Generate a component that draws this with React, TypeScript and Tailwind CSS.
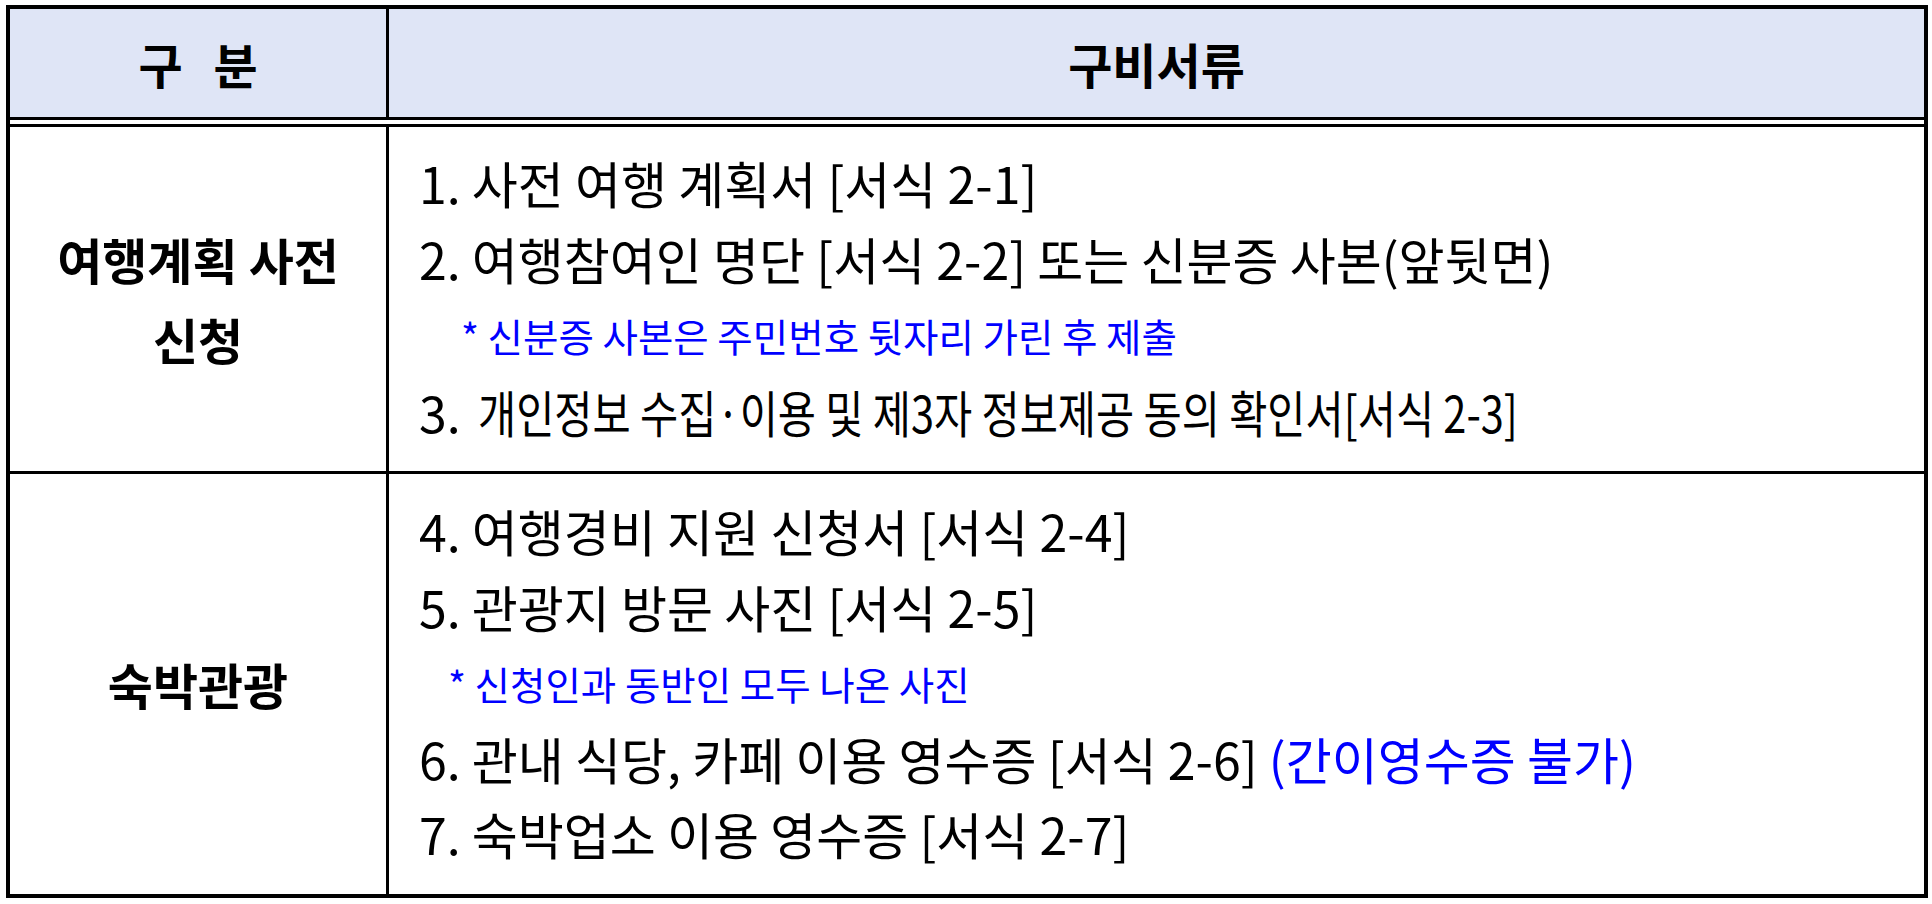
const font = { fontFamily: '"Noto Sans CJK KR", "Noto Sans", sans-serif' }

function Line({ h, children }: { h: string; children: React.ReactNode }) {
  return <div className={`whitespace-nowrap text-[50px] text-black ${h}`}>{children}</div>
}

function Note({ h, indent, children }: { h: string; indent: string; children: React.ReactNode }) {
  return (
    <div className={`whitespace-nowrap text-[38.5px] text-[#0000ff] ${h} ${indent}`}>
      {children}
    </div>
  )
}

export default function App() {
  return (
    <main className="min-h-screen bg-white pl-[6px] pt-[5px]" style={font}>
      <div className="w-[1922px] border-4 border-black">
        <div className="grid h-[111px] grid-cols-[379px_1fr] border-b-[3px] border-black bg-[#dfe5f6]">
          <div className="flex items-center justify-center border-r-[3px] border-black text-[48px] font-bold [word-spacing:20px]">
            구 분
          </div>
          <div className="flex items-center justify-center text-[48px] font-bold">구비서류</div>
        </div>
        <div className="h-[4px] bg-white" />

        <div className="grid h-[350px] grid-cols-[379px_1fr] border-y-[3px] border-black">
          <div className="flex flex-col items-center justify-center border-r-[3px] border-black text-[49px] font-bold leading-[80px]">
            <span>여행계획 사전</span>
            <span>신청</span>
          </div>
          <div className="flex flex-col justify-center pb-[6px] pl-[30px]">
            <Line h="leading-[76px]">1. 사전 여행 계획서 [서식 2-1]</Line>
            <Line h="leading-[77px]">2. 여행참여인 명단 [서식 2-2] 또는 신분증 사본(앞뒷면)</Line>
            <Note h="leading-[77px]" indent="pl-[42px]">* 신분증 사본은 주민번호 뒷자리 가린 후 제출</Note>
            <Line h="leading-[74px]">
              3.{" "}
              <span className="ml-[6px] inline-block origin-left scale-x-[0.83]">
                개인정보 수집·이용 및 제3자 정보제공 동의 확인서[서식 2-3]
              </span>
            </Line>
          </div>
        </div>

        <div className="grid h-[420px] grid-cols-[379px_1fr]">
          <div className="flex items-center justify-center border-r-[3px] border-black text-[49px] font-bold">
            숙박관광
          </div>
          <div className="flex flex-col justify-center pb-[5px] pl-[30px]">
            <Line h="leading-[75px]">4. 여행경비 지원 신청서 [서식 2-4]</Line>
            <Line h="leading-[77px]">5. 관광지 방문 사진 [서식 2-5]</Line>
            <Note h="leading-[76px]" indent="pl-[29px]">* 신청인과 동반인 모두 나온 사진</Note>
            <Line h="leading-[74px]">
              6. 관내 식당, 카페 이용 영수증 [서식 2-6] <span className="text-[#0000ff]">(간이영수증 불가)</span>
            </Line>
            <Line h="leading-[76px]">7. 숙박업소 이용 영수증 [서식 2-7]</Line>
          </div>
        </div>
      </div>
    </main>
  )
}
